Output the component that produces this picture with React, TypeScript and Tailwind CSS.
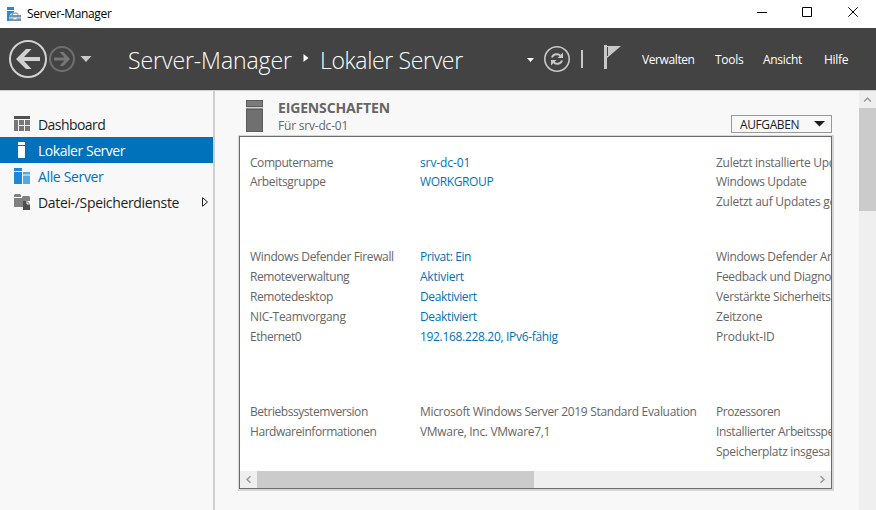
import React from "react";

const font = "font-['Open_Sans','Noto_Sans',sans-serif]";

type Row = { label: string; value?: string; link?: boolean; lt?: string; vt?: string };
type Group = { height: string; left: Row[]; right: Row[] };

const groups: Group[] = [
  {
    height: "h-[94px]",
    left: [
      { label: "Computername", value: "srv-dc-01", link: true, lt: "tracking-[-0.45px]", vt: "tracking-[-0.1px]" },
      { label: "Arbeitsgruppe", value: "WORKGROUP", link: true, lt: "tracking-[-0.32px]", vt: "tracking-[-0.37px]" },
    ],
    right: [
      { label: "Zuletzt installierte Updates", lt: "tracking-[-0.28px]" },
      { label: "Windows Update", lt: "tracking-[-0.35px]" },
      { label: "Zuletzt auf Updates geprüft", lt: "tracking-[-0.26px]" },
    ],
  },
  {
    height: "h-[155px]",
    left: [
      { label: "Windows Defender Firewall", value: "Privat: Ein", link: true, lt: "tracking-[-0.36px]", vt: "tracking-[-0.4px]" },
      { label: "Remoteverwaltung", value: "Aktiviert", link: true, lt: "tracking-[-0.4px]", vt: "tracking-[-0.25px]" },
      { label: "Remotedesktop", value: "Deaktiviert", link: true, lt: "tracking-[-0.43px]", vt: "tracking-[-0.36px]" },
      { label: "NIC-Teamvorgang", value: "Deaktiviert", link: true, lt: "tracking-[-0.3px]", vt: "tracking-[-0.36px]" },
      { label: "Ethernet0", value: "192.168.228.20, IPv6-fähig", link: true, lt: "tracking-[-0.45px]", vt: "tracking-[-0.32px]" },
    ],
    right: [
      { label: "Windows Defender Antivirus", lt: "tracking-[-0.36px]" },
      { label: "Feedback und Diagnose", lt: "tracking-[-0.3px]" },
      { label: "Verstärkte Sicherheitskonfiguration", lt: "tracking-[-0.35px]" },
      { label: "Zeitzone" },
      { label: "Produkt-ID" },
    ],
  },
  {
    height: "h-[68px]",
    left: [
      {
        label: "Betriebssystemversion",
        value: "Microsoft Windows Server 2019 Standard Evaluation",
        lt: "tracking-[-0.44px]",
        vt: "tracking-[-0.32px]",
      },
      { label: "Hardwareinformationen", value: "VMware, Inc. VMware7,1", lt: "tracking-[-0.44px]", vt: "tracking-[-0.31px]" },
    ],
    right: [
      { label: "Prozessoren", lt: "tracking-[-0.47px]" },
      { label: "Installierter Arbeitsspeicher (RAM)", lt: "tracking-[-0.36px]" },
      { label: "Speicherplatz insgesamt", lt: "tracking-[-0.3px]" },
    ],
  },
];

function TitleBar() {
  return (
    <div className="flex h-7 items-center bg-white text-black">
      <svg className="ml-[7px] shrink-0" width="15" height="15" viewBox="0 0 15 15">
        <path d="M0 0h7v3H0zM0 4h7v1.500L4 6.500 2 9v5H0z" fill="#2589d8" />
        <path
          d="M4.500 8V7l1.500-1.500h4L11.500 7v1H14v2.500H2V8zM6 8h4.500V6.800H6zM2 11.300h4.500v1h3v-1H14V14H2z"
          fill="#7895a8"
          fillRule="evenodd"
        />
      </svg>
      <span className="ml-[5px] w-[660px] text-[12px] tracking-[-0.35px]">Server-Manager</span>
      <svg className="ml-auto" width="119" height="28" viewBox="0 0 119 28" fill="none" stroke="#000">
        <path d="M0 12.500h10M45.500 7.500h9v9h-9zM91.300 7.300l9.400 9.400M100.700 7.300l-9.400 9.400" />
      </svg>
    </div>
  );
}

function Header() {
  return (
    <div className="flex h-[62px] items-center bg-[#434343] text-white">
      <svg className="shrink-0" width="110" height="62" viewBox="0 0 110 62" fill="none">
        <circle cx="28" cy="31" r="18" stroke="#d2d2d2" strokeWidth="2" />
        <path d="M16 31L26 21h5.500l-7.500 8h16v4H24l7.500 8H26z" fill="#d2d2d2" />
        <circle cx="62" cy="31" r="12" stroke="#6f6f6f" strokeWidth="2" />
        <path d="M70 31l-6.500-7H59.500l5 5.500H54v3h10.500l-5 5.500h4z" fill="#777" />
        <path d="M80.500 28h11l-5.500 6z" fill="#c8c8c8" />
      </svg>
      <div className="ml-[18px] flex w-[392px] shrink-0 items-center whitespace-nowrap pt-[2px] text-[23px] font-light">
        <span className="w-[164px] tracking-[-0.08px]">Server-Manager</span>
        <svg className="mx-[11px] mb-[5px] shrink-0" width="6" height="8" viewBox="0 0 6 8">
          <path d="M0.500 0L5.500 4L0.500 8z" fill="#fff" />
        </svg>
        <span className="tracking-[-0.35px]">Lokaler Server</span>
      </div>
      <svg className="shrink-0" width="110" height="62" viewBox="0 0 110 62" fill="none">
        <path d="M7 30h7l-3.500 4z" fill="#fff" />
        <circle cx="37" cy="31" r="12.200" stroke="#c8c8c8" strokeWidth="1.600" />
        <path d="M32 29.500c1-3.500 6.500-4.500 8.500-1.500M42 32.500c-1 3.500-6.500 4.500-8.500 1.500" stroke="#c8c8c8" strokeWidth="2" />
        <path d="M43 24.500v5.500h-5.500zM31 37.500v-5.500h5.500z" fill="#c8c8c8" />
        <path d="M61 22h2v18h-2zM84 17h3v24h-3zM87 18h14L87 30z" fill="#c8c8c8" />
        <path d="M87.500 19v9" stroke="#434343" />
      </svg>
      <nav className="ml-[12px] flex whitespace-nowrap pt-[2px] text-[12px] font-medium">
        <span className="w-[73px] tracking-[-0.4px]">Verwalten</span>
        <span className="w-12 tracking-[-0.3px]">Tools</span>
        <span className="w-[61px] tracking-[-0.3px]">Ansicht</span>
        <span className="tracking-[-0.3px]">Hilfe</span>
      </nav>
    </div>
  );
}

function Sidebar() {
  const row = "flex h-[26px] items-center whitespace-nowrap pl-[14px] text-[14px]";
  return (
    <aside className="w-[215px] shrink-0 border-r-2 border-[#cfcfcf] bg-[#f8f8f8] pt-5 text-[#1e1e1e]">
      <div className={row}>
        <svg width="16" height="16" viewBox="0 0 16 16">
          <path d="M0 0h16v3H0z" fill="#505050" />
          <path d="M0 4h4v11H0zM5 4h5v5H5zM11 4h5v5h-5zM5 10h5v5H5zM11 10h5v5h-5z" fill="#777" />
        </svg>
        <span className="ml-2 pt-px tracking-[-0.56px]">Dashboard</span>
      </div>
      <div className={row + " bg-[#0072bc] text-white"}>
        <svg width="16" height="16" viewBox="0 0 16 16">
          <path d="M4 0h7v3H4zM4 4h7v12H4z" fill="#fff" />
        </svg>
        <span className="ml-2 pt-px tracking-[-0.46px]">Lokaler Server</span>
      </div>
      <div className={row + " text-[#0072bc]"}>
        <svg width="16" height="16" viewBox="0 0 16 16">
          <path d="M0 0h8v3H0zM0 4h8v12H0z" fill="#1e88d8" />
          <path d="M9 4h7v2.500H9zM9 7.500h7V16H9z" fill="#55a8e2" />
        </svg>
        <span className="ml-2 pt-px tracking-[-0.35px]">Alle Server</span>
      </div>
      <div className={row}>
        <svg width="16" height="16" viewBox="0 0 16 16">
          <path d="M0 1l1-1h5l1 1v2H0zM0 4h8V3l1-1h6l1 1v4H9v6H0z" fill="#808080" />
          <path d="M9 7h4l3 3v6H9z" fill="#4e4e4e" />
          <path d="M13 7v3h3" stroke="#f8f8f8" fill="none" />
        </svg>
        <span className="ml-2 w-[163px] pt-px tracking-[-0.34px]">Datei-/Speicherdienste</span>
        <svg className="shrink-0" width="8" height="12" viewBox="0 0 8 12">
          <path d="M1.500 1.700v8.600L6.500 6z" fill="none" stroke="#222" />
        </svg>
      </div>
    </aside>
  );
}

function Properties() {
  return (
    <div className="mt-[-1px] h-[356px] w-[596px] border border-r-2 border-b-2 border-[#d6d6d6]">
      <div className="flex h-full flex-col overflow-hidden border border-[#6b6b6b] bg-white">
        <div className="h-[334px] shrink-0 pl-[10px] pt-[16px] text-[12px] whitespace-nowrap text-[#666]">
          {groups.map((g, i) => (
            <div key={i} className={"flex " + g.height}>
              <div className="w-[466px] shrink-0">
                {g.left.map((r, j) => (
                  <div key={r.label} className={"flex h-5 items-center" + (i === 0 && j === 0 ? " -mb-px" : "")}>
                    <span className={"w-[170px] shrink-0 " + (r.lt ?? "tracking-[-0.2px]")}>{r.label}</span>
                    <span className={(r.link ? "text-[#0072bc] " : "") + (r.vt ?? "tracking-[-0.2px]")}>{r.value}</span>
                  </div>
                ))}
              </div>
              <div>
                {g.right.map((r, j) => (
                  <div key={r.label} className={"flex h-5 items-center" + (i === 0 && j === 0 ? " -mb-px" : "")}>
                    <span className={r.lt ?? "tracking-[-0.2px]"}>{r.label}</span>
                  </div>
                ))}
              </div>
            </div>
          ))}
        </div>
        <div className="flex h-[17px] shrink-0 items-center bg-[#efefef]">
          <svg width="17" height="17" viewBox="0 0 17 17" fill="none" stroke="#999" strokeWidth="1.500">
            <path d="M10.500 5.200L7 8.500l3.500 3.300" />
          </svg>
          <div className="h-full w-[277px] bg-[#cbcbcb]" />
          <svg className="ml-auto" width="17" height="17" viewBox="0 0 17 17" fill="none" stroke="#999" strokeWidth="1.500">
            <path d="M6.500 5.200L10 8.500l-3.500 3.300" />
          </svg>
        </div>
      </div>
    </div>
  );
}

export default function App() {
  return (
    <div className={"flex h-[510px] w-[876px] flex-col overflow-hidden bg-[#f8f8f8] " + font}>
      <TitleBar />
      <Header />
      <div className="flex min-h-0 flex-1 border-t border-[#cfcfcf]">
        <Sidebar />
        <main className="w-[644px] shrink-0 pl-[23px]">
          <div className="flex h-[45px] text-[#666]">
            <svg className="mt-[9px] ml-2 shrink-0" width="17" height="32" viewBox="0 0 17 32">
              <path d="M0 0h17v32H0z" fill="#5d5d5d" />
              <path d="M1 1h15v5H1z" fill="#7b7b7b" />
              <path d="M1 10h15v21H1z" fill="#707070" />
              <path d="M0 7h17v1.500H0z" fill="#d0d0d0" />
            </svg>
            <div className="ml-[15px] pt-[8px] whitespace-nowrap">
              <div className="text-[14px] leading-[18px] font-bold tracking-[-0.15px]">EIGENSCHAFTEN</div>
              <div className="text-[12px] leading-[18px] tracking-[-0.2px]">Für srv-dc-01</div>
            </div>
            <div className="mt-6 mr-[27px] ml-auto flex h-[18px] w-[101px] items-center border border-[#999] pl-2 text-[12px] text-[#1e1e1e]">
              <span className="w-[74px] pt-px tracking-[-0.4px]">AUFGABEN</span>
              <svg className="shrink-0" width="11" height="6" viewBox="0 0 11 6">
                <path d="M0 0h11L5.500 5.500z" fill="#1e1e1e" />
              </svg>
            </div>
          </div>
          <Properties />
        </main>
        <div className="flex w-[17px] flex-col bg-[#efefef]">
          <svg width="17" height="17" viewBox="0 0 17 17" fill="none" stroke="#999" strokeWidth="1.500">
            <path d="M5.200 10.500L8.500 7l3.300 3.500" />
          </svg>
          <div className="h-[103px] bg-[#cbcbcb]" />
        </div>
      </div>
    </div>
  );
}
